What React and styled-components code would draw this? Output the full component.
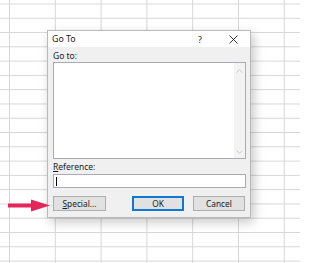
import React from "react";
import styled, { createGlobalStyle } from "styled-components";

const Global = createGlobalStyle`
  html, body { margin: 0; padding: 0; background: #fff; }
  body { font-family: "Noto Sans", "Open Sans", sans-serif; }
`;

const Sheet = styled.div`
  position: relative;
  width: 300px;
  height: 263px;
  overflow: hidden;
  background-color: #fff;
  background-image:
    linear-gradient(to right, #d6d6d6 1px, transparent 1px),
    linear-gradient(to bottom, #d6d6d6 1px, transparent 1px);
  background-size: 45.8px 14.29px;
  background-position: 9px 3.5px;
`;

const Dialog = styled.div`
  position: absolute;
  left: 47px;
  top: 30px;
  width: 202px;
  height: 186px;
  border: 1px solid #b9b9b9;
  background: #f0f0f0;
  box-shadow: 3px 4px 10px rgba(0, 0, 0, 0.22);
  display: flex;
  flex-direction: column;
  color: #1a1a1a;
`;

const TitleBar = styled.div`
  height: 17px;
  background: #fff;
  display: flex;
  align-items: center;
  padding-left: 4px;
  font-size: 8.8px;
`;

const Title = styled.span`
  flex: 1;
`;

const Help = styled.span`
  width: 10px;
  margin-right: 23px;
  font-size: 9px;
  text-align: center;
`;

const Close = styled.span`
  display: flex;
  width: 10px;
  margin-right: 12px;
  justify-content: center;
`;

const Body = styled.div`
  flex: 1;
  display: flex;
  flex-direction: column;
  padding: 4px 4px 6px 5px;
`;

const Label = styled.div`
  font-size: 8.5px;
  line-height: 10px;
  height: 10px;
  margin-bottom: ${(p) => p.$gap || 0}px;
  margin-top: ${(p) => p.$top || 0}px;
`;

const ListBox = styled.div`
  height: 95px;
  border: 1px solid #a9abb2;
  background: #fff;
  display: flex;
  justify-content: flex-end;
`;

const ScrollTrack = styled.div`
  width: 11px;
  background: #f3f3f3;
  display: flex;
  flex-direction: column;
  justify-content: space-between;
  align-items: center;
  padding: 6px 0 4px;
`;

const Input = styled.div`
  height: 12px;
  border: 1px solid #a9abb2;
  background: #fff;
  display: flex;
  align-items: center;
  padding-left: 2px;
`;

const Caret = styled.div`
  width: 1px;
  height: 9px;
  background: #000;
`;

const Buttons = styled.div`
  display: flex;
  margin-top: 8px;
  padding-right: 1px;
`;

const Button = styled.div`
  box-sizing: border-box;
  width: ${(p) => p.$w || 52}px;
  height: 15px;
  margin-left: ${(p) => p.$ml || 0}px;
  background: #e1e1e1;
  border: ${(p) => (p.$primary ? "2px solid #0f78d4" : "1px solid #adadad")};
  display: flex;
  align-items: center;
  justify-content: center;
  font-size: 8.3px;
  color: #1a1a1a;
`;

const U = styled.span`
  text-decoration: underline;
  text-underline-offset: 1px;
`;

const Arrow = styled.svg`
  position: absolute;
  left: 8px;
  top: 199px;
`;

const Chevron = ({ up }) => (
  <svg width="7" height="4" viewBox="0 0 7 4">
    <path
      d={up ? "M0.5 3.5 L3.5 0.8 L6.5 3.5" : "M0.5 0.5 L3.5 3.2 L6.5 0.5"}
      fill="none"
      stroke="#c2c2c2"
      strokeWidth="0.9"
    />
  </svg>
);

export default function App() {
  return (
    <>
      <Global />
      <Sheet>
        <Dialog>
          <TitleBar>
            <Title>Go To</Title>
            <Help>?</Help>
            <Close>
              <svg width="9" height="9" viewBox="0 0 9 9">
                <path d="M0.5 0.5 L8.5 8.5 M8.5 0.5 L0.5 8.5" stroke="#222" strokeWidth="0.9" />
              </svg>
            </Close>
          </TitleBar>
          <Body>
            <Label $gap={1}>Go to:</Label>
            <ListBox>
              <ScrollTrack>
                <Chevron up />
                <Chevron />
              </ScrollTrack>
            </ListBox>
            <Label $top={3} $gap={2}>
              <U>R</U>eference:
            </Label>
            <Input>
              <Caret />
            </Input>
            <Buttons>
              <Button $w={53}>
                <U>S</U>pecial...
              </Button>
              <Button $primary $ml={26}>OK</Button>
              <Button $ml={9}>Cancel</Button>
            </Buttons>
          </Body>
        </Dialog>
        <Arrow width="43" height="13" viewBox="0 0 43 13">
          <rect x="0" y="4.5" width="25" height="4" fill="#e5265b" />
          <polygon points="23,0.5 42,6.5 23,12.5" fill="#e5265b" />
        </Arrow>
      </Sheet>
    </>
  );
}
